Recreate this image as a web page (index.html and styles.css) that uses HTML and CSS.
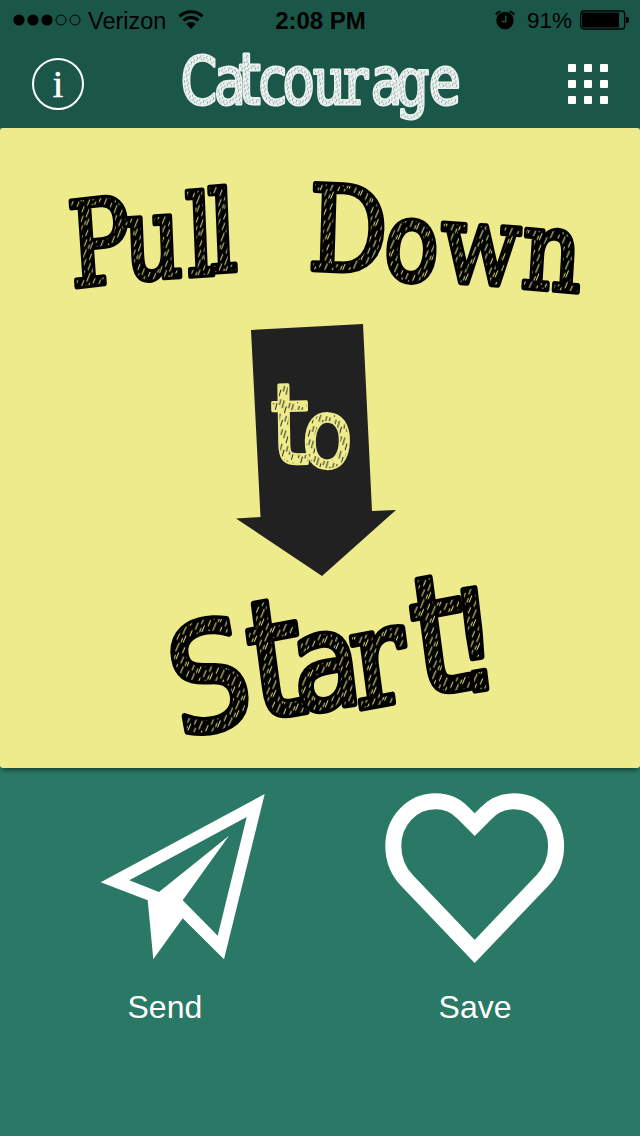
FILE: index.html
```
<!DOCTYPE html>
<html lang="en">
<head>
<meta charset="utf-8">
<title>Catcourage</title>
<link rel="stylesheet" href="styles.css">
</head>
<body>
<header class="top">
  <div class="status">
    <div class="status-left">
      <svg class="signal" width="68" height="12" viewBox="0 0 68 12"><circle cx="6" cy="6" r="5.6"/><circle cx="20" cy="6" r="5.6"/><circle cx="34" cy="6" r="5.6"/><circle cx="48" cy="6" r="5" class="ring"/><circle cx="62" cy="6" r="5" class="ring"/></svg>
      <span class="carrier">Verizon</span>
      <svg class="wifi" width="26" height="20" viewBox="0 0 26 20"><path d="M1.500 6.300a16.500 16.500 0 0 1 23 0M5.600 10.600a10.600 10.600 0 0 1 14.800 0" fill="none" stroke="#000" stroke-width="3"/><path d="M8.200 14a7 7 0 0 1 9.600 0L13 19z"/></svg>
    </div>
    <div class="clock">2:08 PM</div>
    <div class="status-right">
      <svg width="20" height="20" viewBox="0 0 20 20"><circle cx="10" cy="10.500" r="8.700"/><path d="M1 5Q2 2 5.500 1.400M19 5Q18 2 14.500 1.400" fill="none" stroke="#000" stroke-width="1.800"/><path d="M10.700 5.500V11.500H6.500" fill="none" stroke="#1b5748" stroke-width="1.500"/></svg>
      <span class="percent">91%</span>
      <svg width="50" height="20" viewBox="0 0 50 20"><rect x=".7" y="1" width="44" height="18" rx="3" fill="none" stroke="#000" stroke-width="1.300"/><rect x="2" y="2.500" width="37" height="15" rx="1"/><path d="M46 7h1.500q1.500 0 1.500 3t-1.500 3H46z"/></svg>
    </div>
  </div>
  <nav class="bar">
    <div class="info">i</div>
    <svg class="title" width="300" height="80" viewBox="170 46 300 80">
      <defs><pattern id="chalk" width="5" height="7" patternUnits="userSpaceOnUse" patternTransform="rotate(25)"><rect width="5" height="7" fill="#eef3f1"/><path d="M1 0v4M3.500 3v4" stroke="#6d958c" stroke-width=".8"/></pattern></defs>
      <text class="logo" transform="scale(.8 1)" x="226 267.500 298 323 353.500 391 429 463.500 495 536" y="104"><tspan class="sans">Ca</tspan><tspan class="sans logo-t">t</tspan><tspan class="sans">co</tspan>ur<tspan class="sans">a</tspan>g<tspan class="sans">e</tspan></text>
    </svg>
    <div class="grid"><i></i><i></i><i></i><i></i><i></i><i></i><i></i><i></i><i></i></div>
  </nav>
</header>
<main class="card">
  <svg width="640" height="640" viewBox="0 128 640 640">
    <defs>
      <pattern id="ink" width="15" height="19" patternUnits="userSpaceOnUse" patternTransform="rotate(27)"><rect width="15" height="19"/><path d="M2 1v9M6 10v7M10 2v6M13 11v7M3.500 14v4" stroke="#eeec8c" stroke-width="1.100" stroke-linecap="round"/></pattern>
      <pattern id="gold" width="11" height="14" patternUnits="userSpaceOnUse" patternTransform="rotate(18)"><rect width="11" height="14" fill="#eeec8c"/><path d="M2 1v8M6 6v7M9 1v6" stroke="#212121" stroke-width="1.100"/></pattern>
    </defs>
    <text class="ink pull" transform="scale(.78 1)" x="92 160 241 270" y="287 280 276 272" rotate="-5 -3 -3 -3">Pu<tspan class="tall">ll</tspan></text>
    <text class="ink pull" transform="scale(.84 1)" x="366 455 523 619" y="269 278 281 287" rotate="2 4 3 4">D<tspan class="sans round">o</tspan><tspan class="tall">wn</tspan></text>
    <path class="arrow" d="M251 330L363 324L372 511L396 510L322 576L236 518.500L260.500 517z"/>
    <text class="gold" transform="scale(.88 1)" x="308 342" y="464 466" rotate="-1 2"><tspan class="gold-t">t</tspan>o</text>
    <text class="ink start" transform="scale(.84 1)" x="214 305 354 425 500 545" y="738 721 713 709 697 693" rotate="-12 -9 -8 -9 -9 -8"><tspan class="sans bend">S</tspan><tspan class="sans big">t</tspan><tspan class="sans small">a</tspan>r<tspan class="sans big">t</tspan><tspan class="sans">!</tspan></text>
  </svg>
</main>
<footer class="actions">
  <div class="action send">
    <svg width="166" height="167" viewBox="100 793 166 167"><path fill="#fff" fill-rule="evenodd" d="M100.700 882.300L264.700 794L224 959.300L182.700 918.300L153.300 959.300L147.700 900.300zM129.300 880.300L159 892L229 835.700L182.700 900.300L217.700 935.700L246.700 817z"/></svg>
    <span>Send</span>
  </div>
  <div class="action save">
    <svg width="180" height="171" viewBox="385 793 180 171"><path fill="none" stroke="#fff" stroke-width="16" d="M474.700 824.700L463 813C455.500 805 446 801.300 435.500 801.300C412 801.300 393.300 821 393.300 846C393.300 861 398 871 407 880.500L474.700 951.400L542.400 880.500C551.400 871 556.100 861 556.100 846C556.100 821 537.400 801.300 513.900 801.300C503.400 801.300 493.900 805 486.400 813z"/></svg>
    <span>Save</span>
  </div>
</footer>
</body>
</html>
```
FILE: styles.css
```
* { box-sizing: border-box; }
body { margin: 0; width: 640px; height: 1136px; background: #2a7966; font-family: "Liberation Sans", Arial, sans-serif; overflow: hidden; }
svg { display: block; flex: none; }
.top { height: 128px; background: #1b5748; }
.status { height: 40px; display: grid; grid-template-columns: 1fr auto 1fr; align-items: center; padding: 0 10px 0 13px; color: #000; font-size: 24px; line-height: 40px; }
.status-left, .status-right { display: flex; align-items: center; }
.status-right { justify-content: flex-end; }
.ring { fill: none; stroke: #000; stroke-width: 1; }
.carrier { margin-left: 7px; font-size: 23.500px; position: relative; top: 1px; }
.wifi { margin-left: 12px; }
.clock { font-weight: bold; position: relative; top: 1px; left: -1px; }
.percent { font-size: 22.500px; margin: 0 8px 0 12px; position: relative; top: 1px; }
.bar { height: 88px; display: flex; align-items: flex-start; justify-content: space-between; padding: 6px 32px 0; }
.info { width: 52px; height: 52px; margin-top: 12px; border: 2px solid #fff; border-radius: 50%; color: #fff; font: 38px/48px "Liberation Serif", serif; -webkit-text-stroke: .5px #fff; text-align: center; }
.title { margin-left: -12px; overflow: visible; }
.logo { font: 65px "DejaVu Serif", serif; fill: url(#chalk); stroke: #edf2f0; stroke-width: 3; stroke-linejoin: round; paint-order: stroke; }
.logo-t { font-size: 71px; }
.sans { font-family: "DejaVu Sans", sans-serif; }
.grid { display: grid; grid-template-columns: repeat(3, 8px); grid-auto-rows: 8px; gap: 8px; margin-top: 18px; }
.grid i { background: #fff; border-radius: 1px; }
.card { height: 640px; background: #edeb8b; border-radius: 3px; box-shadow: 0 4px 5px -2px rgba(0, 0, 0, .5); overflow: hidden; }
.ink { font-family: "DejaVu Serif", serif; fill: url(#ink); stroke: #000; stroke-width: 6; stroke-linejoin: round; paint-order: stroke; }
.pull { font-size: 117px; }
.tall { font-size: 111px; }
.round { font-size: 107px; }
.start { font-size: 138px; stroke-width: 7; }
.bend { font-size: 148px; }
.big { font-size: 165px; }
.small { font-size: 132px; }
.arrow { fill: #212121; }
.gold { font: 95px "DejaVu Sans", sans-serif; fill: url(#gold); stroke: #eeec8c; stroke-width: 3.500; stroke-linejoin: round; paint-order: stroke; }
.gold-t { font-size: 112px; }
.actions { display: flex; height: 368px; padding-top: 25px; color: #fff; font-size: 32px; line-height: 40px; }
.action { display: flex; flex-direction: column; justify-content: space-between; height: 234px; }
.send { margin-left: 100px; }
.send span { margin-left: 27.500px; }
.save { margin-left: 119px; }
.save span { text-align: center; }
```
